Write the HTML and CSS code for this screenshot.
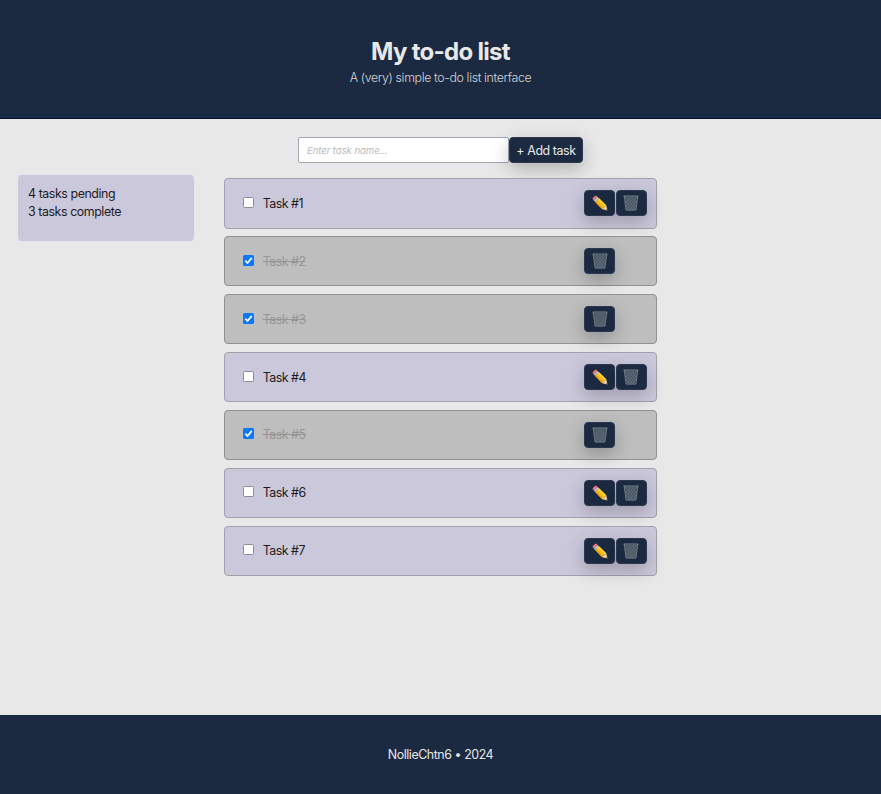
FILE: index.html
```html
<!DOCTYPE html>
<html lang="en">
<head>
<meta charset="utf-8">
<title>My to-do list</title>
<link rel="stylesheet" href="styles.css">
</head>
<body>
<svg class="sprite" aria-hidden="true">
  <symbol id="pencil" viewBox="0 0 16 16">
    <path d="M.8 3.1 2.9 1Q3.8.2 4.7 1L5.6 1.9 1.9 5.6 1 4.7Q.2 3.8.8 3.1Z" fill="#f0707c"/>
    <path d="M1.9 5.6 5.6 1.9 7 3.2 3.2 7Z" fill="#b4d0de"/>
    <path d="M3.2 7 7 3.2 14.2 10.2 10.2 14.2Z" fill="#fbbd16"/>
    <path d="M3.2 7 4.2 6 11.2 13.2 10.2 14.2Z" fill="#f29c14"/>
    <path d="M5.8 4.4 7 3.2 14.2 10.2 13 11.4Z" fill="#ffd63e"/>
    <path d="M10.2 14.2 14.2 10.2 15.6 15.6Z" fill="#f4d6a3"/>
    <path d="M14 15.1 15.1 14 15.6 15.6Z" fill="#383838"/>
  </symbol>
  <symbol id="bin" viewBox="0 0 16 16">
    <path d="M.9 1.2H15.1L13.3 14.8Q13.1 15.6 12.3 15.6H3.7Q2.9 15.6 2.7 14.8Z" fill="#465361"/>
    <path d="M3 3 12 14M6 3 13 11.5M9 3 13.5 8.5M2.5 6 9.5 14.5M3 10 7 14.5M13 3 4 14M10 3 3 11.5M7 3 2.5 8.5M13.5 6 6.5 14.5M13 10 9 14.5" stroke="#717c88" stroke-width=".5" fill="none"/>
    <path d="M1.3 2 3.1 15.1H12.9L14.7 2" stroke="#737f89" stroke-width=".8" fill="none"/>
    <rect x=".5" y=".6" width="15" height="1.7" rx=".8" fill="#788690"/>
    <path d="M2 1.5H14" stroke="#38464f" stroke-width=".6"/>
  </symbol>
</svg>
<header class="header">
  <h1>My to-do list</h1>
  <p>A (very) simple to-do list interface</p>
</header>
<main class="main">
  <form class="form">
    <input class="field" type="text" placeholder="Enter task name...">
    <button class="btn add" type="button">+ Add task</button>
  </form>
  <div class="content">
    <aside class="summary"><p>4 tasks pending</p><p>3 tasks complete</p></aside>
    <ul class="tasks">
      <li class="task"><span class="check"></span><span class="name">Task #1</span><div class="actions"><button class="btn"><svg><use href="#pencil"/></svg></button><button class="btn"><svg><use href="#bin"/></svg></button></div></li>
      <li class="task done"><span class="check"><svg viewBox="0 0 11 11"><path d="M2.3 5.7 4.5 8 8.8 2.9"/></svg></span><span class="name">Task #2</span><div class="actions"><button class="btn"><svg><use href="#bin"/></svg></button></div></li>
      <li class="task done"><span class="check"><svg viewBox="0 0 11 11"><path d="M2.3 5.7 4.5 8 8.8 2.9"/></svg></span><span class="name">Task #3</span><div class="actions"><button class="btn"><svg><use href="#bin"/></svg></button></div></li>
      <li class="task"><span class="check"></span><span class="name">Task #4</span><div class="actions"><button class="btn"><svg><use href="#pencil"/></svg></button><button class="btn"><svg><use href="#bin"/></svg></button></div></li>
      <li class="task done"><span class="check"><svg viewBox="0 0 11 11"><path d="M2.3 5.7 4.5 8 8.8 2.9"/></svg></span><span class="name">Task #5</span><div class="actions"><button class="btn"><svg><use href="#bin"/></svg></button></div></li>
      <li class="task"><span class="check"></span><span class="name">Task #6</span><div class="actions"><button class="btn"><svg><use href="#pencil"/></svg></button><button class="btn"><svg><use href="#bin"/></svg></button></div></li>
      <li class="task"><span class="check"></span><span class="name">Task #7</span><div class="actions"><button class="btn"><svg><use href="#pencil"/></svg></button><button class="btn"><svg><use href="#bin"/></svg></button></div></li>
    </ul>
  </div>
</main>
<footer class="footer">NollieChtn6 • 2024</footer>
</body>
</html>
```
FILE: styles.css
```css
* { box-sizing: border-box; }
body {
  margin: 0;
  height: 794px;
  display: flex;
  flex-direction: column;
  overflow: hidden;
  background: #e8e8e8;
  color: #1c1b22;
  font: 12.4px/18px Inter, "Liberation Sans", sans-serif;
  letter-spacing: -.43px;
}
h1, p, ul { margin: 0; padding: 0; }
.sprite { position: absolute; width: 0; height: 0; }
.header {
  height: 119px;
  flex: none;
  padding-top: 36.6px;
  text-align: center;
  background: #1c2a41;
  color: #e8e8e8;
  border-bottom: 1px solid #00103c;
}
.header h1 { font-size: 24px; line-height: 30px; font-weight: 700; letter-spacing: -.7px; }
.header p { margin-top: 2px; font-weight: 300; letter-spacing: -.38px; color: #d2d4d8; }
.main { flex: 1; padding-top: 18px; }
.form { display: flex; justify-content: center; height: 26px; }
.field {
  width: 211px;
  padding: 0 8px;
  border: 1px solid #a5a2b2;
  border-radius: 2px;
  background: #fff;
  font: italic 9.6px Inter, sans-serif;
  letter-spacing: -.08px;
}
.field::placeholder { color: #b9b9bd; }
.btn {
  display: flex;
  align-items: center;
  justify-content: center;
  width: 31px;
  height: 26px;
  padding: 0;
  border: 1px solid #2c384e;
  border-radius: 4px;
  background: #1c2a41;
  color: #e8e8e8;
  font: 12.4px Inter, sans-serif;
  letter-spacing: -.4px;
  box-shadow: 0 6px 18px rgba(0, 0, 0, .24);
}
.btn svg { width: 16px; height: 16px; }
.add { width: 74px; }
.content { display: flex; align-items: flex-start; padding: 12px 0 0 18px; }
.summary {
  width: 176px;
  height: 66px;
  padding: 10px;
  border-radius: 4px;
  background: #ccc8dc;
}
.tasks {
  display: flex;
  flex-direction: column;
  gap: 7.7px;
  width: 433px;
  margin: 3.4px 0 0 30.2px;
  list-style: none;
}
.task {
  display: flex;
  align-items: center;
  height: 50.2px;
  padding: 0 9.4px 0 18px;
  border: 1px solid #a2a0aa;
  border-radius: 4px;
  background: #ccc8dc;
}
.check {
  width: 11px;
  height: 11px;
  margin: 0 8.5px 2px 0;
  flex: none;
  border: 1px solid #8d8a99;
  border-radius: 1.5px;
  background: #fff;
}
.check svg { display: block; width: 11px; height: 11px; fill: none; stroke: #fff; stroke-width: 1.7; }
.name { flex: 1; padding-top: 1px; letter-spacing: -.5px; }
.actions { display: flex; width: 62.8px; gap: .6px; }
.done { background: #bebebe; border-color: #929292; }
.done .check { border: 0; background: #0b78fa; }
.done .name { color: #969696; text-decoration: line-through; }
.footer {
  height: 79.5px;
  flex: none;
  display: flex;
  align-items: center;
  justify-content: center;
  padding-top: 1px;
  background: #1c2a41;
  color: #e8e8e8;
}
```
